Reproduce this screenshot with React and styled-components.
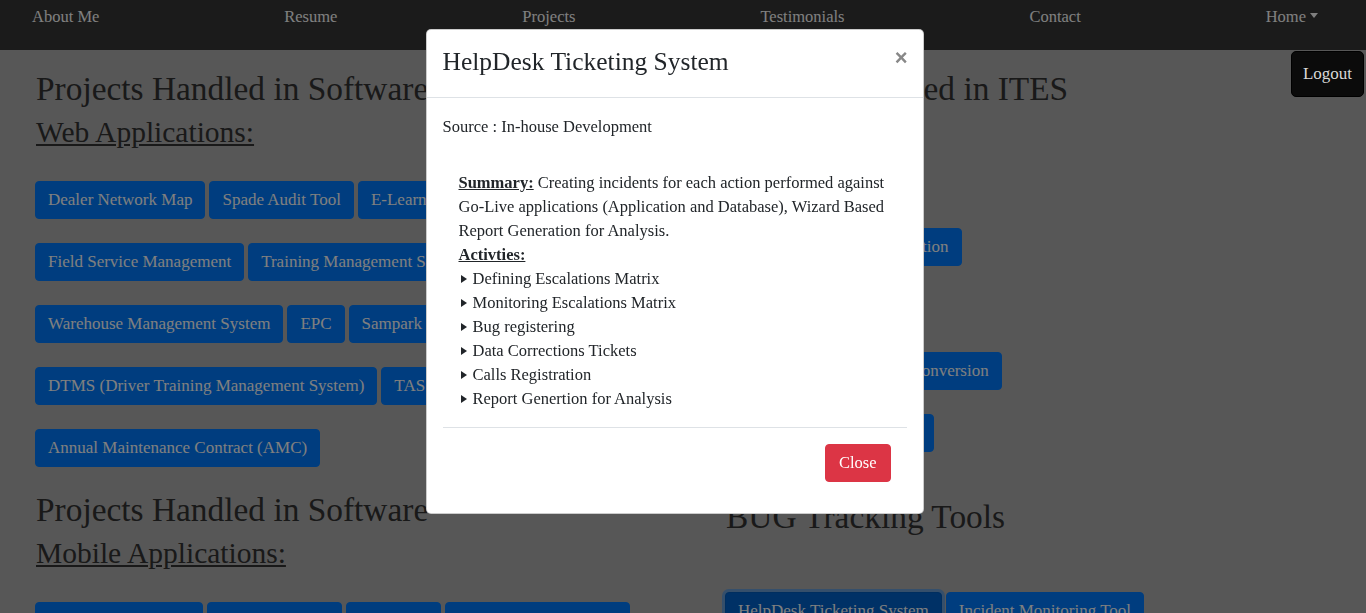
import React from 'react'
import styled, { createGlobalStyle, css } from 'styled-components'

const GlobalStyle = createGlobalStyle`
    html, body {
        margin: 0;
        padding: 0;
    }
    body {
        background: #aeaeae;
        font-family: "Liberation Serif", "Times New Roman", serif;
        color: #212529;
        overflow: hidden;
    }
    * {
        box-sizing: border-box;
    }
`

const navItems = ['About Me', 'Resume', 'Projects', 'Testimonials', 'Contact']

const webApps = [
    ['Dealer Network Map', 'Spade Audit Tool', 'E-Learning Portal'],
    ['Field Service Management', 'Training Management System'],
    ['Warehouse Management System', 'EPC', 'Sampark'],
    ['DTMS (Driver Training Management System)', 'TAS'],
    ['Annual Maintenance Contract (AMC)'],
]

const mobileApps = [
    ['Dealer Network App', 'Spare Parts App', 'E-Catalog', 'Vehicle Inspection App'],
]

const itesProjects = [
    ['Data Entry Operations'],
    ['Insurance Claims Adjudication'],
    ['Form Processing'],
    ['Legacy Documents Data Conversion'],
    ['Invoice Processing System'],
]

const bugTools = [
    ['HelpDesk Ticketing System', 'Incident Monitoring Tool'],
]

const activities = [
    'Defining Escalations Matrix',
    'Monitoring Escalations Matrix',
    'Bug registering',
    'Data Corrections Tickets',
    'Calls Registration',
    'Report Genertion for Analysis',
]

const ButtonList = ({ rows, top, active }) => (
    <Stack $top={top}>
        {rows.map((row, i) => (
            <Row key={i}>
                {row.map(name => (
                    <ProjectButton key={name} $active={name === active}>{name}</ProjectButton>
                ))}
            </Row>
        ))}
    </Stack>
)

const App = () => {
    return (
        <>
            <GlobalStyle />
            <Navbar>
                {navItems.map(item => <NavLink key={item}>{item}</NavLink>)}
                <NavLink $dropdown>Home</NavLink>
            </Navbar>

            <Main>
                <Column>
                    <Heading $top={19}>Projects Handled in Software</Heading>
                    <SubHeading>Web Applications:</SubHeading>
                    <ButtonList rows={webApps} top={32} />
                    <Heading $top={23}>Projects Handled in Software</Heading>
                    <SubHeading>Mobile Applications:</SubHeading>
                    <ButtonList rows={mobileApps} top={32} />
                </Column>
                <Column>
                    <Heading $top={19}>Projects Handled in ITES</Heading>
                    <ButtonList rows={itesProjects} top={57} />
                    <Heading $top={45}>BUG Tracking Tools</Heading>
                    <ButtonList rows={bugTools} top={55} active="HelpDesk Ticketing System" />
                </Column>
            </Main>

            <Backdrop />

            <ModalWrap>
                <Dialog>
                    <ModalHeader>
                        <ModalTitle>HelpDesk Ticketing System</ModalTitle>
                        <CloseX>×</CloseX>
                    </ModalHeader>
                    <ModalBody>
                        <Source>Source : In-house Development</Source>
                        <Details>
                            <Label>Summary:</Label> Creating incidents for each action performed against
                            Go-Live applications (Application and Database), Wizard Based Report Generation
                            for Analysis.
                            <br />
                            <Label>Activties:</Label>
                            <Activities>
                                {activities.map(a => <Activity key={a}>{a}</Activity>)}
                            </Activities>
                        </Details>
                        <Divider />
                        <ModalFooter>
                            <CloseButton>Close</CloseButton>
                        </ModalFooter>
                    </ModalBody>
                </Dialog>
            </ModalWrap>

            <Logout>Logout</Logout>
        </>
    )
}

export default App

const Navbar = styled.nav`
    height: 50px;
    background: #363636;
    display: flex;
    justify-content: space-between;
    align-items: flex-start;
    padding: 5px 48px 0 32px;
`

const NavLink = styled.a`
    color: #fff;
    font-size: 16.5px;
    line-height: 24px;
    text-decoration: none;
    cursor: pointer;

    ${p => p.$dropdown && css`
        &::after {
            content: '';
            display: inline-block;
            margin-left: 4px;
            vertical-align: 4px;
            border-top: 5px solid #fff;
            border-left: 4.5px solid transparent;
            border-right: 4.5px solid transparent;
        }
    `}
`

const Main = styled.main`
    display: grid;
    grid-template-columns: 690px 1fr;
    padding-left: 35px;
`

const Column = styled.section`
    display: flex;
    flex-direction: column;
    align-items: flex-start;
    min-width: 0;
`

const Heading = styled.h2`
    margin: ${p => p.$top}px 0 0;
    font-size: 33.4px;
    line-height: 40px;
    font-weight: 400;
    color: #333;
    padding-left: 1px;
    white-space: nowrap;
`

const SubHeading = styled.h3`
    margin: 6px 0 0;
    font-size: 29.5px;
    line-height: 34px;
    font-weight: 400;
    color: #333;
    text-decoration: underline;
    padding-left: 1px;
`

const Stack = styled.div`
    display: flex;
    flex-direction: column;
    gap: 24px;
    margin-top: ${p => p.$top}px;
`

const Row = styled.div`
    display: flex;
    gap: 4px;
`

const ProjectButton = styled.button`
    font-family: inherit;
    font-size: 17px;
    line-height: 24px;
    padding: 6px 12px;
    border: 1px solid #007bff;
    border-radius: 4px;
    background: #007bff;
    color: #fff;
    white-space: nowrap;
    cursor: pointer;

    ${p => p.$active && css`
        background: #0062cc;
        border-color: #005cbf;
        box-shadow: 0 0 0 3px rgba(38, 143, 255, 0.5);
    `}
`

const Backdrop = styled.div`
    position: fixed;
    inset: 0;
    background: rgba(0, 0, 0, 0.5);
    z-index: 10;
`

const ModalWrap = styled.div`
    position: fixed;
    inset: 0;
    z-index: 20;
    padding-right: 17px;
    overflow: hidden;
`

const Dialog = styled.div`
    width: 498px;
    margin: 29px auto 0;
    background: #fff;
    border: 1px solid rgba(0, 0, 0, 0.2);
    border-radius: 5px;
`

const ModalHeader = styled.div`
    display: flex;
    justify-content: space-between;
    align-items: flex-start;
    padding: 14px 16px 17px;
    border-bottom: 1px solid #dee2e6;
`

const ModalTitle = styled.h5`
    margin: 0;
    font-size: 25.5px;
    line-height: 36px;
    font-weight: 400;
    color: #212529;
`

const CloseX = styled.button`
    margin: 3px -1px 0 0;
    padding: 0;
    border: none;
    background: none;
    font-family: "Liberation Sans", Arial, sans-serif;
    font-size: 22px;
    font-weight: 700;
    line-height: 22px;
    color: #888;
    cursor: pointer;
`

const ModalBody = styled.div`
    padding: 17px 16px 16px;
    font-size: 16.5px;
    line-height: 24px;
`

const Source = styled.p`
    margin: 0 0 16px;
`

const Details = styled.div`
    padding: 16px 16px 0;
`

const Label = styled.b`
    text-decoration: underline;
`

const Activities = styled.ul`
    list-style: none;
    margin: 0;
    padding: 0;
`

const Activity = styled.li`
    &::before {
        content: '';
        display: inline-block;
        margin: 0 6px 0 2px;
        vertical-align: 1px;
        border-left: 6px solid #212529;
        border-top: 4px solid transparent;
        border-bottom: 4px solid transparent;
    }
`

const Divider = styled.hr`
    margin: 16px 0;
    border: 0;
    border-top: 1px solid #dee2e6;
`

const ModalFooter = styled.div`
    display: flex;
    justify-content: flex-end;
    padding: 0 16px 15px;
`

const CloseButton = styled.button`
    font-family: inherit;
    font-size: 16.5px;
    line-height: 24px;
    padding: 6px 13px;
    border: 1px solid #dc3545;
    border-radius: 4px;
    background: #dc3545;
    color: #fff;
    cursor: pointer;
`

const Logout = styled.button`
    position: fixed;
    top: 51px;
    right: 2px;
    z-index: 30;
    font-family: inherit;
    font-size: 17px;
    line-height: 24px;
    padding: 10px 11px;
    background: #0b0b0b;
    color: #d8d8d8;
    border: 1px solid #000;
    border-radius: 5px;
    cursor: pointer;
`
